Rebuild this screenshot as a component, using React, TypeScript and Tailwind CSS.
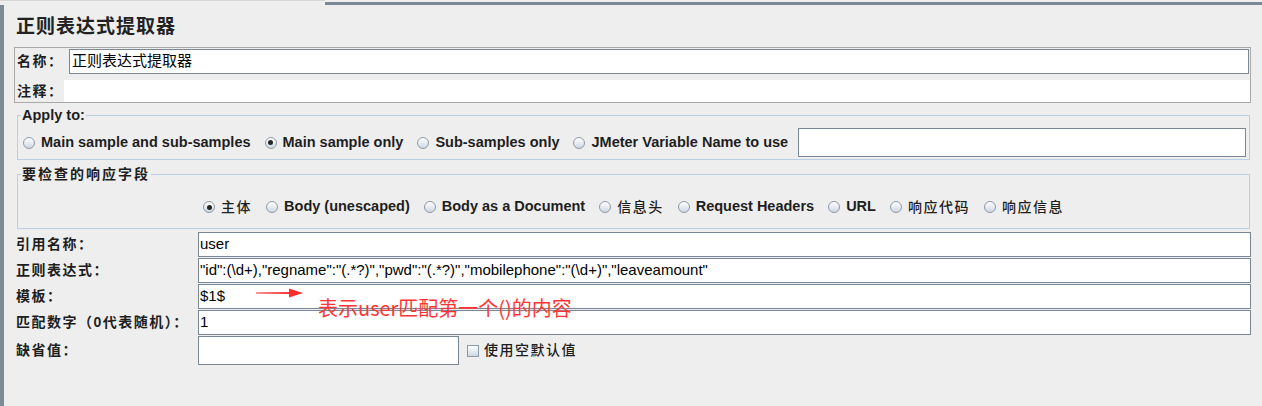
import React from 'react';

const ui = "font-['Liberation_Sans','Noto_Sans_CJK_SC',sans-serif]";

const Radio: React.FC<{ checked?: boolean }> = ({ checked }) => (
  <span className="flex h-[12px] w-[12px] shrink-0 items-center justify-center rounded-full border border-[#8d9aa7] bg-linear-to-b from-white to-[#cfd8e2]">
    {checked && <span className="h-[5px] w-[5px] rounded-full bg-[#262626]" />}
  </span>
);

const Option: React.FC<{ label: string; checked?: boolean; cjk?: boolean }> = ({ label, checked, cjk }) => (
  <label className="flex items-center gap-[6px] whitespace-nowrap">
    <Radio checked={checked} />
    <span className={cjk ? 'text-[14px] font-medium tracking-[1.5px]' : ''}>{label}</span>
  </label>
);

const Field: React.FC<{ value?: string; className?: string }> = ({ value, className }) => (
  <div
    className={`flex items-center border border-[#7a8896] bg-white px-[1px] text-[15px] font-normal tracking-normal text-black whitespace-nowrap overflow-hidden ${className ?? ''}`}
  >
    {value}
  </div>
);

const rows = [
  { label: '引用名称：', value: 'user' },
  { label: '正则表达式：', value: '"id":(\\d+),"regname":"(.*?)","pwd":"(.*?)","mobilephone":"(\\d+)","leaveamount"' },
  { label: '模板：', value: '$1$' },
  { label: '匹配数字（0代表随机）：', value: '1' },
];

const App: React.FC = () => {
  return (
    <div className={`relative flex h-[406px] w-full flex-col overflow-hidden bg-[#eeeeee] text-[#1e1e1e] ${ui}`}>
      {/* window frame top */}
      <div className="flex h-[5px] shrink-0">
        <div className="w-[325px] border-t border-[#d6d6d6]" />
        <div className="mt-[2px] h-[3px] flex-1 bg-[#7b8895]" />
      </div>

      <div className="flex flex-1 flex-col border-l-4 border-[#7d8995] pl-[10px] pr-[11px]">
        {/* title */}
        <div className="flex h-[42px] items-center pl-[2px] pt-[3px] text-[19px] font-bold tracking-[1px] text-[#222]">
          正则表达式提取器
        </div>

        {/* name / comment */}
        <div className="flex flex-col border border-[#a9a9a9] pt-[1px] text-[14px] font-bold tracking-[1.5px]">
          <div className="flex h-[25px] items-center pl-[2px] pr-[1px]">
            <span className="w-[52px]">名称：</span>
            <Field value="正则表达式提取器" className="h-[25px] flex-1 pl-[2px]" />
          </div>
          <div className="mt-[6px] flex h-[22px] items-center pl-[2px]">
            <span className="w-[47px]">注释：</span>
            <div className="h-full flex-1 bg-white" />
          </div>
        </div>

        {/* apply to */}
        <fieldset className="mt-[4px] ml-[3px] mr-[1px] border border-[#b8cfe4] text-[14.5px] font-bold">
          <legend className="ml-[3px] px-[1px] leading-[16px]">Apply to:</legend>
          <div className="flex items-center gap-[14px] pl-[5px] pr-[3px] pt-[5px] pb-[2px]">
            <Option label="Main sample and sub-samples" />
            <Option label="Main sample only" checked />
            <Option label="Sub-samples only" />
            <Option label="JMeter Variable Name to use" />
            <Field className="ml-[-4px] h-[29px] flex-1" />
          </div>
        </fieldset>

        {/* response field */}
        <fieldset className="mt-[6px] ml-[3px] mr-[1px] border border-[#b8cfe4] text-[14.5px] font-bold">
          <legend className="ml-[3px] px-[1px] text-[14px] leading-[16px] tracking-[2px]">要检查的响应字段</legend>
          <div className="flex h-[18px] items-center justify-center gap-[14px] mt-[16px] mb-[12px]">
            <Option label="主体" checked cjk />
            <Option label="Body (unescaped)" />
            <Option label="Body as a Document" />
            <Option label="信息头" cjk />
            <Option label="Request Headers" />
            <Option label="URL" />
            <Option label="响应代码" cjk />
            <Option label="响应信息" cjk />
          </div>
        </fieldset>

        {/* extractor settings */}
        <div className="mt-[3px] flex flex-col gap-[1px] text-[14px] font-bold">
          {rows.map((r) => (
            <div key={r.label} className="flex h-[25px] items-center pl-[2px]">
              <span className="w-[182px] whitespace-nowrap tracking-[1.5px]">{r.label}</span>
              <Field value={r.value} className="h-[25px] flex-1" />
            </div>
          ))}
          <div className="flex h-[29px] items-center pl-[2px]">
            <span className="w-[182px] tracking-[1.5px]">缺省值：</span>
            <Field className="h-[29px] w-[261px]" />
            <label className="ml-[8px] flex items-center gap-[5px] font-medium">
              <span className="h-[12px] w-[12px] border border-[#8d9aa7] bg-linear-to-b from-white to-[#cfd8e2]" />
              <span className="tracking-[1.5px]">使用空默认值</span>
            </label>
          </div>
        </div>
      </div>

      {/* red annotation */}
      <svg className="absolute left-[256px] top-[288px]" width="48" height="10" viewBox="0 0 48 10">
        <path d="M0 4.6 L36 4 L36 6 L0 5.4 Z" fill="#ff2d2d" />
        <polygon points="33,0.5 47,5 33,9.5" fill="#ff2d2d" />
      </svg>
      <div className="absolute left-[318px] top-[296px] text-[20px] leading-[24px] text-[#ff3535] font-['Noto_Sans_CJK_SC',sans-serif]">
        表示user匹配第一个()的内容
      </div>
    </div>
  );
};

export default App;
